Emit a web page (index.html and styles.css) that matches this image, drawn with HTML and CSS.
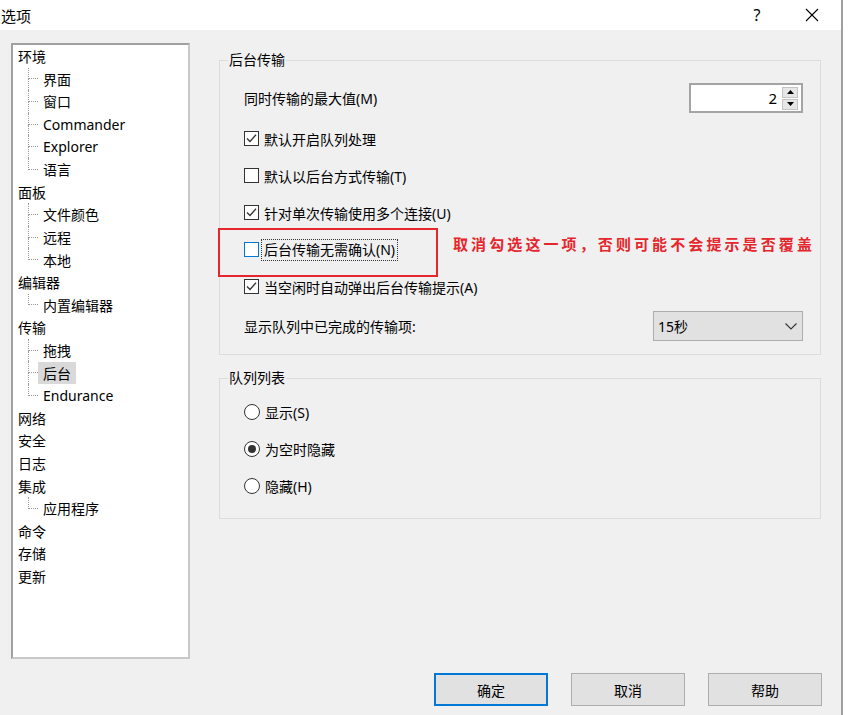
FILE: index.html
```html
<!DOCTYPE html>
<html lang="zh-CN">
<head>
<meta charset="utf-8">
<title>选项</title>
<link rel="stylesheet" href="styles.css">
</head>
<body>
<div class="window">
  <div class="titlebar">
    <span class="title">选项</span>
    <span class="help">?</span>
    <span class="close"><svg width="14" height="14" viewBox="0 0 14 14"><path d="M1 1 L13 13 M13 1 L1 13" stroke="#000" stroke-width="1.1" fill="none"/></svg></span>
  </div>
  <div class="body">
    <div class="tree">
      <div class="node">环境</div>
      <div class="child"><span class="conn"></span><span class="label">界面</span></div>
      <div class="child"><span class="conn"></span><span class="label">窗口</span></div>
      <div class="child"><span class="conn"></span><span class="label">Commander</span></div>
      <div class="child"><span class="conn"></span><span class="label">Explorer</span></div>
      <div class="child last"><span class="conn"></span><span class="label">语言</span></div>
      <div class="node">面板</div>
      <div class="child"><span class="conn"></span><span class="label">文件颜色</span></div>
      <div class="child"><span class="conn"></span><span class="label">远程</span></div>
      <div class="child last"><span class="conn"></span><span class="label">本地</span></div>
      <div class="node">编辑器</div>
      <div class="child last"><span class="conn"></span><span class="label">内置编辑器</span></div>
      <div class="node">传输</div>
      <div class="child"><span class="conn"></span><span class="label">拖拽</span></div>
      <div class="child sel"><span class="conn"></span><span class="label">后台</span></div>
      <div class="child last"><span class="conn"></span><span class="label">Endurance</span></div>
      <div class="node">网络</div>
      <div class="node">安全</div>
      <div class="node">日志</div>
      <div class="node">集成</div>
      <div class="child last"><span class="conn"></span><span class="label">应用程序</span></div>
      <div class="node">命令</div>
      <div class="node">存储</div>
      <div class="node">更新</div>
    </div>
    <div class="panel">
      <div class="group g1">
        <span class="legend">后台传输</span>
        <div class="spin-row">
          <span>同时传输的最大值(M)</span>
          <div class="spinner">
            <span class="spin-val">2</span>
            <span class="spin-btns">
              <span class="spin-btn"><svg width="7" height="4" viewBox="0 0 7 4"><path d="M0 4 L3.5 0 L7 4 Z" fill="#000"/></svg></span>
              <span class="spin-btn"><svg width="7" height="4" viewBox="0 0 7 4"><path d="M0 0 L3.5 4 L7 0 Z" fill="#000"/></svg></span>
            </span>
          </div>
        </div>
        <div class="check-row"><span class="cb"><svg width="13" height="13" viewBox="0 0 13 13"><path d="M2 6.5 L5 9.5 L11 2.8" stroke="#333" stroke-width="1.3" fill="none"/></svg></span><span>默认开启队列处理</span></div>
        <div class="check-row"><span class="cb"></span><span>默认以后台方式传输(T)</span></div>
        <div class="check-row"><span class="cb"><svg width="13" height="13" viewBox="0 0 13 13"><path d="M2 6.5 L5 9.5 L11 2.8" stroke="#333" stroke-width="1.3" fill="none"/></svg></span><span>针对单次传输使用多个连接(U)</span></div>
        <div class="check-row"><span class="cb focus"></span><span class="focus-label">后台传输无需确认(N)</span></div>
        <div class="check-row"><span class="cb"><svg width="13" height="13" viewBox="0 0 13 13"><path d="M2 6.5 L5 9.5 L11 2.8" stroke="#333" stroke-width="1.3" fill="none"/></svg></span><span>当空闲时自动弹出后台传输提示(A)</span></div>
        <div class="combo-row">
          <span>显示队列中已完成的传输项:</span>
          <div class="combo"><span>15秒</span><svg width="12" height="7" viewBox="0 0 12 7"><path d="M0.5 0.5 L6 6 L11.5 0.5" stroke="#333" stroke-width="1.1" fill="none"/></svg></div>
        </div>
        <div class="note-box"></div>
        <div class="note-text">取消勾选这一项，否则可能不会提示是否覆盖</div>
      </div>
      <div class="group g2">
        <span class="legend">队列列表</span>
        <div class="radio-row"><span class="rb"></span><span>显示(S)</span></div>
        <div class="radio-row"><span class="rb on"><span class="dot"></span></span><span>为空时隐藏</span></div>
        <div class="radio-row"><span class="rb"></span><span>隐藏(H)</span></div>
      </div>
    </div>
  </div>
  <div class="footer">
    <button class="btn default">确定</button>
    <button class="btn">取消</button>
    <button class="btn">帮助</button>
  </div>
</div>
</body>
</html>
```

FILE: styles.css
```css
html, body {
  margin: 0;
  padding: 0;
  background: #ffffff;
}
body {
  font-family: "Noto Sans", "Noto Sans CJK SC", sans-serif;
  font-size: 14px;
  color: #000;
}
.window {
  width: 841px;
  height: 715px;
  background: #f0f0f0;
  border-right: 2px solid #a0a0a0;
  display: flex;
  flex-direction: column;
}
.titlebar {
  height: 30px;
  background: #ffffff;
  display: flex;
  align-items: center;
  font-size: 15px;
}
.title {
  padding-left: 1px;
  flex: 1;
}
.help {
  width: 14px;
  text-align: center;
  margin-right: 41px;
  font-size: 16px;
}
.close {
  display: flex;
  margin-right: 22px;
}
.body {
  display: flex;
  padding: 13px 0 0 11px;
}
.tree {
  width: 175px;
  height: 612px;
  background: #fff;
  border: 2px solid #b4b4b4;
  border-color: #a0a0a0 #c8c8c8 #c8c8c8 #a0a0a0;
  box-sizing: content-box;
  display: flex;
  flex-direction: column;
}
.node, .child {
  height: 22.6px;
  display: flex;
  align-items: center;
  white-space: nowrap;
}
.node {
  padding-left: 5px;
}
.child {
  padding-left: 15px;
  align-items: stretch;
}
.conn {
  width: 10px;
  display: flex;
  flex-direction: column;
}
.conn::before {
  content: "";
  flex: 1;
  border-left: 1px dotted #9a9a9a;
  border-bottom: 1px dotted #9a9a9a;
}
.conn::after {
  content: "";
  flex: 1;
  border-left: 1px dotted #9a9a9a;
}
.child.last .conn::after {
  border-left-color: transparent;
}
.label {
  display: flex;
  align-items: center;
  padding: 0 5px;
}
.child.sel .label {
  background: #d9d9d9;
  margin: 0.3px 0;
}
.panel {
  margin-left: 29px;
  margin-top: 17px;
  width: 602px;
  display: flex;
  flex-direction: column;
}
.group {
  position: relative;
  border: 1px solid #dcdcdc;
  display: flex;
  flex-direction: column;
  padding-left: 24px;
  padding-right: 17px;
}
.legend {
  position: absolute;
  top: -10px;
  left: 8px;
  padding: 0 1px;
  line-height: 18px;
  background: #f0f0f0;
}
.g1 {
  padding-top: 22px;
  padding-bottom: 13px;
}
.g2 {
  margin-top: 23px;
  padding-top: 14px;
  padding-bottom: 14px;
}
.spin-row, .combo-row {
  height: 30px;
  display: flex;
  align-items: center;
  justify-content: space-between;
}
.spin-row {
  margin-bottom: 7px;
}
.combo-row {
  margin-top: 6px;
}
.spinner {
  width: 114px;
  height: 30px;
  box-sizing: border-box;
  background: #fff;
  border: 2px solid #a4a4a4;
  display: flex;
  align-items: center;
  justify-content: flex-end;
  padding-right: 3px;
}
.spin-val {
  margin-right: 5px;
  font-size: 15px;
}
.spin-btns {
  display: flex;
  flex-direction: column;
  gap: 1px;
}
.spin-btn {
  width: 14px;
  height: 9px;
  border: 1px solid #c4c4c4;
  background: #e6e6e6;
  display: flex;
  align-items: center;
  justify-content: center;
}
.check-row, .radio-row {
  height: 37px;
  display: flex;
  align-items: center;
  gap: 5px;
}
.cb {
  width: 13px;
  height: 13px;
  border: 1px solid #333;
  background: #fff;
  display: flex;
  align-items: center;
  justify-content: center;
}
.cb.focus {
  border-color: #0078d7;
}
.focus-label {
  outline: 1px dotted #333;
  outline-offset: 1px;
  margin-left: -1px;
  padding: 0 1px;
  line-height: 18px;
}
.combo {
  width: 150px;
  height: 30px;
  box-sizing: border-box;
  border: 1px solid #adadad;
  background: #e1e1e1;
  display: flex;
  align-items: center;
  justify-content: space-between;
  padding: 0 5px 0 4px;
}
.rb {
  width: 14px;
  height: 14px;
  border: 1px solid #333;
  border-radius: 50%;
  background: #fff;
  display: flex;
  align-items: center;
  justify-content: center;
}
.rb .dot {
  width: 8px;
  height: 8px;
  border-radius: 50%;
  background: #333;
}
.note-box {
  position: absolute;
  left: -2px;
  top: 167px;
  width: 216px;
  height: 45px;
  border: 2px solid #e5262d;
}
.note-text {
  position: absolute;
  left: 233px;
  top: 172px;
  line-height: 22px;
  font-family: "Noto Sans CJK SC", sans-serif;
  font-size: 15px;
  font-weight: bold;
  letter-spacing: 3.1px;
  color: #e5262d;
  white-space: nowrap;
}
.footer {
  display: flex;
  justify-content: flex-end;
  gap: 23px;
  padding-right: 19px;
  margin-top: 14px;
}
.btn {
  width: 114px;
  height: 33px;
  background: #e1e1e1;
  border: 1px solid #adadad;
  font-family: "Noto Sans CJK SC", sans-serif;
  font-size: 14px;
  color: #000;
  padding: 0;
}
.btn.default {
  border: 2px solid #0078d7;
}
```
